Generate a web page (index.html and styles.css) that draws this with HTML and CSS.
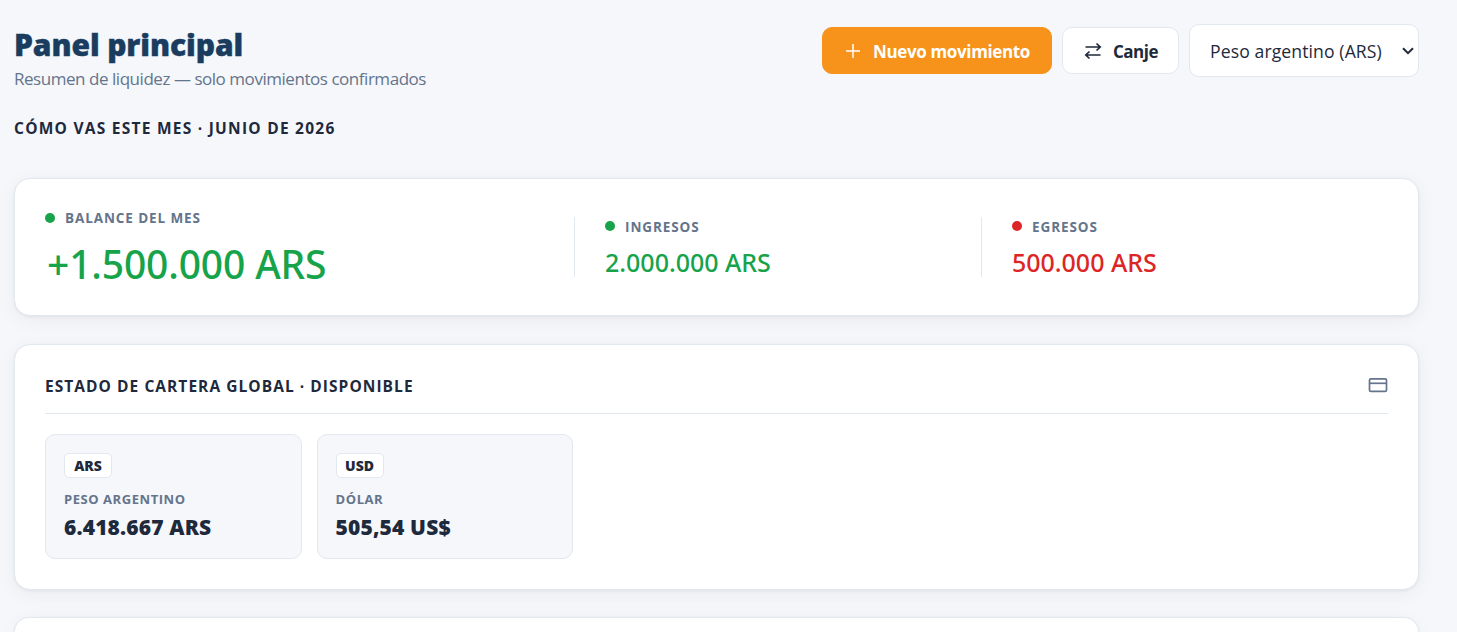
FILE: index.html
```
<!DOCTYPE html>
<html lang="es">

<head>
  <meta charset="UTF-8">
  <title>Panel principal</title>
  <link rel="stylesheet" href="styles.css">
</head>

<body>

  <main class="panel">
    <header class="panel-header">
      <div class="panel-titulos">
        <h1>Panel principal</h1>
        <p class="subtitulo">Resumen de liquidez — solo movimientos confirmados</p>
      </div>
      <div class="acciones">
        <button class="btn btn-primario">
          <svg class="icono-mas" width="16" height="16" viewBox="0 0 16 16" fill="none" stroke="currentColor" stroke-width="1.5">
            <path d="M8 1v14M1 8h14" />
          </svg>
          <span class="txt-nuevo">Nuevo movimiento</span>
        </button>
        <button class="btn btn-secundario">
          <svg width="18" height="18" viewBox="0 0 18 18" fill="none" stroke="currentColor" stroke-width="1.7">
            <path d="M1.5 5h15M12.5 1.5 16.2 5l-3.7 3.5M16.5 13h-15M5.5 9.5 1.8 13l3.7 3.5" />
          </svg>
          <span class="txt-canje">Canje</span>
        </button>
        <div class="selector-caja">
          <select class="selector">
            <option>Peso argentino (ARS)</option>
          </select>
          <svg class="flecha" width="12" height="8" viewBox="0 0 12 8" fill="none" stroke="currentColor" stroke-width="2">
            <path d="M1 1.2l5 5 5-5" />
          </svg>
        </div>
      </div>
    </header>

    <h2 class="seccion seccion-mes">Cómo vas este mes · junio de 2026</h2>

    <section class="tarjeta resumen">
      <div class="dato dato-principal">
        <p class="etiqueta"><span class="punto verde"></span><span>Balance del mes</span></p>
        <p class="monto positivo">+1.500.000 ARS</p>
      </div>
      <div class="dato">
        <p class="etiqueta"><span class="punto verde"></span><span>Ingresos</span></p>
        <p class="monto positivo">2.000.000 ARS</p>
      </div>
      <div class="dato">
        <p class="etiqueta"><span class="punto rojo"></span><span>Egresos</span></p>
        <p class="monto negativo">500.000 ARS</p>
      </div>
    </section>

    <section class="tarjeta cartera">
      <div class="cartera-header">
        <h2 class="seccion">Estado de cartera global · disponible</h2>
        <svg width="20" height="20" viewBox="0 0 20 20" fill="none" stroke="currentColor" stroke-width="1.7">
          <rect x="1.5" y="3.8" width="17" height="12.6" rx="1.5" />
          <path d="M1.5 8.3h17" />
        </svg>
      </div>
      <div class="monedas">
        <article class="moneda">
          <span class="codigo">ARS</span>
          <p class="nombre">Peso argentino</p>
          <p class="saldo">6.418.667 ARS</p>
        </article>
        <article class="moneda">
          <span class="codigo">USD</span>
          <p class="nombre">Dólar</p>
          <p class="saldo">505,54 US$</p>
        </article>
      </div>
    </section>

    <section class="tarjeta siguiente"></section>
  </main>

</body>

</html>
```
FILE: styles.css
```
* {
  box-sizing: border-box;
}

body {
  font-family: "Open Sans", "Noto Sans", sans-serif;
  background-color: #f5f7fb;
  color: #1e293b;
  margin: 0;
}

h1,
h2,
p {
  margin: 0;
  white-space: nowrap;
}

.panel {
  padding: 24px 38px 0 14px;
}

.panel-header {
  display: flex;
  justify-content: space-between;
  height: 68px;
}

h1 {
  font-size: 30px;
  font-weight: 800;
  line-height: 42px;
  letter-spacing: -0.1px;
  color: #1a3c5e;
  -webkit-text-stroke: 0.4px #1a3c5e;
}

.subtitulo {
  font-size: 17px;
  line-height: 25px;
  letter-spacing: -0.46px;
  color: #64748b;
}

.acciones {
  display: flex;
  align-items: center;
  gap: 10px;
  height: 53px;
}

.btn {
  display: flex;
  align-items: center;
  height: 47px;
  border: 1px solid #e2e8f0;
  border-radius: 10px;
  background-color: #fff;
  color: #1e293b;
  font-family: inherit;
  font-size: 17px;
  white-space: nowrap;
}

.btn span {
  padding-top: 2px;
}

.btn-primario {
  width: 230px;
  gap: 12px;
  padding: 0 0 0 22px;
  background-color: #f7931a;
  border-color: #f7931a;
  color: #fff;
  font-weight: 700;
}

.btn-secundario {
  width: 117px;
  gap: 11px;
  padding: 0 0 0 21px;
  font-weight: 700;
}

.txt-nuevo {
  letter-spacing: -0.36px;
}

.txt-canje {
  letter-spacing: -0.5px;
}

.selector-caja {
  position: relative;
}

.selector {
  display: block;
  appearance: none;
  width: 230px;
  height: 53px;
  padding: 1px 30px 0 20px;
  border: 1px solid #e2e8f0;
  border-radius: 10px;
  background-color: #fff;
  color: #1e293b;
  font-family: inherit;
  font-size: 17.6px;
  letter-spacing: 0.1px;
}

.flecha {
  position: absolute;
  top: 23px;
  right: 5px;
  pointer-events: none;
}

.seccion {
  font-size: 15.5px;
  font-weight: 700;
  line-height: 22px;
  letter-spacing: 1.05px;
  text-transform: uppercase;
}

.seccion-mes {
  margin: 25px 0 39px;
  letter-spacing: 1.25px;
}

.tarjeta {
  background-color: #fff;
  border: 1px solid #e2e8f0;
  border-radius: 16px;
  box-shadow: 0 4px 20px rgba(0, 0, 0, 0.05), 0 1px 3px rgba(0, 0, 0, 0.06);
  padding: 0 30px;
  margin-bottom: 28px;
}

.resumen {
  display: grid;
  grid-template-columns: 1.3fr 1fr 1fr;
  align-items: center;
  height: 138px;
}

.dato {
  height: 60px;
  padding-left: 30px;
  border-left: 1px solid #e2e8f0;
}

.dato-principal {
  height: 78px;
  padding-left: 0;
  border-left: none;
}

.etiqueta {
  display: flex;
  align-items: center;
  gap: 10px;
  height: 19px;
  font-size: 13.5px;
  font-weight: 700;
  letter-spacing: 0.9px;
  text-transform: uppercase;
  color: #64748b;
}

.dato-principal .etiqueta {
  height: 20px;
}

.punto {
  width: 10px;
  height: 10px;
  border-radius: 50%;
  margin-bottom: 1px;
}

.verde {
  background-color: #16a34a;
}

.rojo {
  background-color: #dc2626;
}

.monto {
  font-family: "Noto Sans", "Open Sans", sans-serif;
  font-size: 25px;
  font-weight: 500;
  line-height: 34px;
  margin-top: 9px;
  letter-spacing: -0.03px;
}

.dato-principal .monto {
  font-size: 39px;
  line-height: 52px;
  margin-top: 10px;
  padding-left: 2px;
  letter-spacing: -0.15px;
}

.positivo {
  color: #16a34a;
}

.negativo {
  color: #dc2626;
}

.cartera {
  height: 246px;
  margin-bottom: 27px;
}

.cartera-header {
  display: flex;
  align-items: center;
  justify-content: space-between;
  height: 69px;
  padding-top: 12px;
  border-bottom: 1px solid #e2e8f0;
}

.cartera-header .seccion {
  padding-top: 2px;
}

.cartera-header svg {
  color: #64748b;
}

.monedas {
  display: grid;
  grid-template-columns: repeat(5, 1fr);
  gap: 15px;
  margin-top: 20px;
}

.moneda {
  height: 125px;
  padding: 18px;
  background-color: #f5f7fb;
  border: 1px solid #e2e8f0;
  border-radius: 10px;
}

.codigo {
  display: block;
  width: 48px;
  height: 25px;
  border: 1px solid #e2e8f0;
  border-radius: 5px;
  background-color: #fff;
  font-size: 14px;
  font-weight: 800;
  line-height: 23px;
  text-align: center;
}

.nombre {
  margin-top: 11px;
  font-size: 13px;
  font-weight: 700;
  line-height: 20px;
  letter-spacing: 0.55px;
  text-transform: uppercase;
  color: #64748b;
}

.saldo {
  margin-top: 4px;
  font-size: 21px;
  font-weight: 800;
  line-height: 28px;
  letter-spacing: 0.15px;
}

.siguiente {
  height: 15px;
  margin-bottom: 0;
  border-bottom: none;
  border-radius: 16px 16px 0 0;
}
```
